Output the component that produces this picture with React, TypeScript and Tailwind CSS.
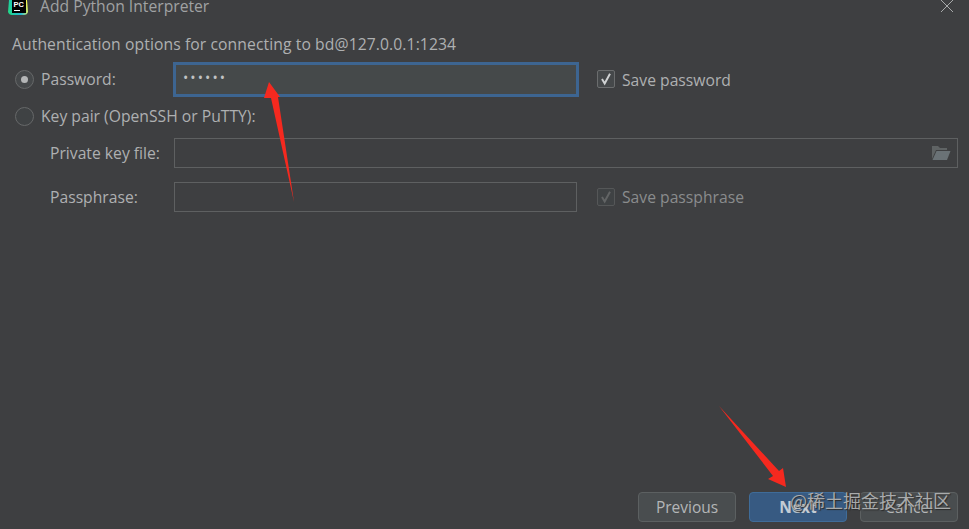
const labelFont = "font-['Open_Sans','Noto_Sans',sans-serif]"

function Radio({ checked }: { checked?: boolean }) {
  return (
    <span className={`flex h-[19px] w-[19px] shrink-0 items-center justify-center rounded-full border border-[#666869] ${checked ? 'bg-[#45484a]' : 'bg-[#3f4244]'}`}>
      {checked && <span className="h-[7px] w-[7px] rounded-full bg-[#b4b6b7]" />}
    </span>
  )
}

function Checkbox({ disabled }: { disabled?: boolean }) {
  return (
    <span className={`flex h-[18px] w-[18px] shrink-0 items-center justify-center rounded-[2px] border ${disabled ? 'border-[#555758] bg-[#3f4244]' : 'border-[#6b6d6e] bg-[#45484a]'}`}>
      <svg viewBox="0 0 18 18" className="h-[18px] w-[18px]" fill="none">
        <path d="M4.5 9 L7.5 14 L13.5 3" stroke={disabled ? '#626465' : '#d0d2d3'} strokeWidth="2.2" />
      </svg>
    </span>
  )
}

function Button({ label, primary }: { label: string; primary?: boolean }) {
  return (
    <button
      type="button"
      className={`flex h-[30px] w-[98px] items-center justify-center rounded-[4px] border pt-[2px] text-[15.5px] ${
        primary
          ? 'border-[#3f6c99] bg-[#375a82] font-bold text-[#c4ccd4]'
          : 'border-[#5c6061] bg-[#494d4f] text-[#b4b6b7]'
      }`}
    >
      {label}
    </button>
  )
}

export default function App() {
  return (
    <div className={`relative flex h-[529px] w-[969px] flex-col overflow-hidden bg-[#3e3f41] text-[15.7px] text-[#aeb0b1] ${labelFont}`}>
      {/* Title bar, cut off at the top */}
      <div className="flex h-[14px] items-start pl-[8px] pr-[15px]">
        <svg viewBox="0 0 20 15" className="h-[15px] w-[20px] shrink-0">
          <defs>
            <linearGradient id="pc" x1="0" y1="0.6" x2="1" y2="0.4">
              <stop offset="0" stopColor="#21d789" />
              <stop offset="0.55" stopColor="#21b8d7" />
              <stop offset="1" stopColor="#fcf84a" />
            </linearGradient>
          </defs>
          <path d="M1 0 H19 L20 12 Q19 15 16 15 H4 Q1 15 0 12 Z" fill="url(#pc)" />
          <rect x="4" y="0" width="14" height="13" fill="#000" />
          <rect x="6" y="10" width="6" height="1" fill="#fff" />
          <text x="5.5" y="7" fontSize="7.5" fontWeight="700" fill="#fff" fontFamily="'Liberation Sans', sans-serif">PC</text>
        </svg>
        <span className="ml-[12px] mt-[-2px] leading-[16px] text-[#a0a2a3]">Add Python Interpreter</span>
        <svg viewBox="0 0 14 14" className="ml-auto h-[14px] w-[14px] text-[#a8aaab]" fill="none" stroke="currentColor" strokeWidth="1">
          <path d="M1 0 L13 12 M13 0 L1 12" />
        </svg>
      </div>

      <div className="flex flex-1 flex-col pl-[12px] pr-[11px]">
        <div className="mt-[20px] leading-[20px] tracking-[0.09px]">Authentication options for connecting to bd@127.0.0.1:1234</div>

        {/* Password */}
        <div className="mt-[8px] flex h-[35px] items-center">
          <div className="ml-[3px] flex w-[158px] items-center gap-[7px]">
            <Radio checked />
            <span className="pt-[1px]">Password:</span>
          </div>
          <div className="flex h-[35px] w-[406px] items-center border-[3px] border-[#3d6591] bg-[#45494a] pb-[5px] pl-[7px] text-[14px] tracking-[2.1px] text-[#c0c2c3]">
            ••••••
          </div>
          <div className="ml-[18px] flex items-center gap-[7px]">
            <Checkbox />
            <span className="pt-[3px]">Save password</span>
          </div>
        </div>

        {/* Key pair */}
        <div className="ml-[3px] mt-[6px] flex h-[26px] items-center gap-[7px]">
          <Radio />
          <span className="pt-[2px]">Key pair (OpenSSH or PuTTY):</span>
        </div>

        <div className="mt-[9px] flex h-[30px] items-center">
          <span className="w-[162px] pl-[38px] pt-[2px]">Private key file:</span>
          <div className="flex h-[30px] flex-1 items-center justify-end border border-[#5e6061] pr-[6px]">
            <svg viewBox="0 0 20 16" className="h-[16px] w-[20px]">
              <path d="M1 1 H7 L9 3 H16 V5 H5 L1 14 Z" fill="#5f6364" />
              <path d="M5.5 6 H19.5 L16 15 H1.5 Z" fill="#6a7276" />
            </svg>
          </div>
        </div>

        <div className="mt-[14px] flex h-[30px] items-center">
          <span className="w-[162px] pl-[38px] pt-[2px]">Passphrase:</span>
          <div className="h-[30px] w-[403px] border border-[#5e6061]" />
          <div className="ml-[20px] flex items-center gap-[7px] text-[#8a8c8d]">
            <Checkbox disabled />
            <span className="pt-[2px]">Save passphrase</span>
          </div>
        </div>

        <div className="mb-[7px] mt-auto flex justify-end gap-[13px]">
          <Button label="Previous" />
          <Button label="Next" primary />
          <Button label="Cancel" />
        </div>
      </div>

      {/* Annotation arrows drawn over the screenshot */}
      <svg viewBox="0 0 969 529" className="pointer-events-none absolute inset-0 h-[529px] w-[969px]">
        <polygon points="269,82 280,97 278,97 294,202 271,98 264,98" fill="#f5291f" />
        <polygon points="719,406 779,471 783,468 786,487 768,479 773,476" fill="#f5291f" />
      </svg>

      {/* Site watermark */}
      <div className="absolute left-[790px] top-[489px] font-['Noto_Sans_CJK_SC',sans-serif] text-[18px] leading-[22px] text-[#a9abac] [text-shadow:1px_1px_1px_#2a2a2a]">
        @稀土掘金技术社区
      </div>
    </div>
  )
}
